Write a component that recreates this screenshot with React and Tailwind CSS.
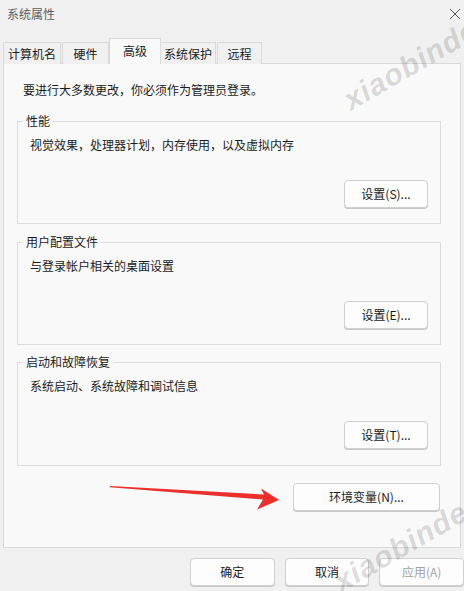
import React from "react";

const font = { fontFamily: '"Noto Sans CJK SC", "Noto Sans", sans-serif' };

function Btn({ children, className = "", disabled = false }) {
  return (
    <div
      className={
        "flex items-center justify-center h-[28px] rounded-[4px] border border-[#d0d0d0] bg-[#fdfdfd] text-[12px] shadow-[0_1px_0_#c8c8c8] " +
        (disabled ? "text-[#a2a2a2] " : "text-[#1b1b1b] ") +
        className
      }
    >
      {children}
    </div>
  );
}

function Group({ title, text, button, className = "" }) {
  return (
    <div className={"relative border border-[#dcdcdc] h-[103px] flex flex-col " + className}>
      <div className="absolute -top-[9px] left-[5px] px-[3px] bg-[#f9f9f9] text-[12px] leading-[16px] text-[#1b1b1b]">
        {title}
      </div>
      <div className="pt-[15px] pl-[12px] text-[12px] leading-[16px] text-[#1b1b1b]">{text}</div>
      <div className="flex justify-end pr-[12px] mt-[27px]">
        <Btn className="w-[84px]">{button}</Btn>
      </div>
    </div>
  );
}

export default function App() {
  const tabs = ["计算机名", "硬件", "高级", "系统保护", "远程"];
  const widths = ["w-[58px]", "w-[47px]", "w-[52px]", "w-[56px]", "w-[45px]"];
  return (
    <div className="relative w-[464px] h-[591px] bg-[#f0f0f0] overflow-hidden flex flex-col" style={font}>
      {/* title bar */}
      <div className="h-[28px] flex items-center justify-between pl-[7px] pr-[2px]">
        <span className="text-[12px] text-[#5c5c5c]">系统属性</span>
        <svg width="12" height="12" viewBox="0 0 12 12" className="mr-[1px]">
          <path d="M1 1 L11 11 M11 1 L1 11" stroke="#555" strokeWidth="1" />
        </svg>
      </div>
      {/* tabs */}
      <div className="mt-[10px] h-[26px] flex items-end pl-[3px] relative z-10">
        {tabs.map((t, i) =>
          i === 2 ? (
            <div
              key={t}
              className={"h-[26px] border border-b-0 border-[#d9d9d9] bg-[#f9f9f9] flex items-start justify-center pt-[3px] text-[12px] text-[#1b1b1b] -mx-[1px] " + widths[i]}
            >
              {t}
            </div>
          ) : (
            <div
              key={t}
              className={"h-[22px] border border-b-0 border-[#dadada] bg-[#f0f0f0] flex items-center justify-center text-[12px] text-[#1b1b1b] mr-[1px] " + widths[i]}
            >
              {t}
            </div>
          )
        )}
      </div>
      {/* panel */}
      <div className="-mt-[1px] ml-[3px] w-[458px] h-[485px] border border-[#d9d9d9] bg-[#f9f9f9] flex flex-col pl-[13px]">
        <div className="mt-[18px] pl-[6px] text-[12px] leading-[16px] text-[#1b1b1b]">
          要进行大多数更改，你必须作为管理员登录。
        </div>
        <div className="w-[424px] mt-[23px] flex flex-col">
          <Group title="性能" text="视觉效果，处理器计划，内存使用，以及虚拟内存" button="设置(S)..." />
          <Group className="mt-[18px]" title="用户配置文件" text="与登录帐户相关的桌面设置" button="设置(E)..." />
          <Group className="mt-[17px] h-[104px]" title="启动和故障恢复" text="系统启动、系统故障和调试信息" button="设置(T)..." />
          <div className="flex justify-end pr-[1px] mt-[17px]">
            <Btn className="w-[147px]">环境变量(N)...</Btn>
          </div>
        </div>
      </div>
      {/* bottom buttons */}
      <div className="mt-[10px] flex gap-[10px] pl-[190px]">
        <Btn className="w-[85px]">确定</Btn>
        <Btn className="w-[85px]">取消</Btn>
        <Btn className="w-[85px]" disabled>应用(A)</Btn>
      </div>

      {/* red arrow annotation */}
      <svg className="absolute left-0 top-0 pointer-events-none" width="464" height="591">
        <polygon
          points="110,486 264,494.5 261,488.5 279,500 257,509.5 263,499.5 110,487.2"
          fill="#ec2f2a"
        />
      </svg>

      {/* watermarks */}
      <div className="absolute left-[346px] top-[84px] h-[36px] leading-[36px] -rotate-[30deg] origin-left text-[30px] font-bold italic text-[#000]/15 pointer-events-none tracking-[1px]" style={{ fontFamily: '"Liberation Sans", sans-serif' }}>
        xiaobinde
      </div>
      <div className="absolute left-[336px] top-[566px] h-[36px] leading-[36px] -rotate-[30deg] origin-left text-[30px] font-bold italic text-[#000]/15 pointer-events-none tracking-[1px]" style={{ fontFamily: '"Liberation Sans", sans-serif' }}>
        xiaobinde
      </div>
    </div>
  );
}
